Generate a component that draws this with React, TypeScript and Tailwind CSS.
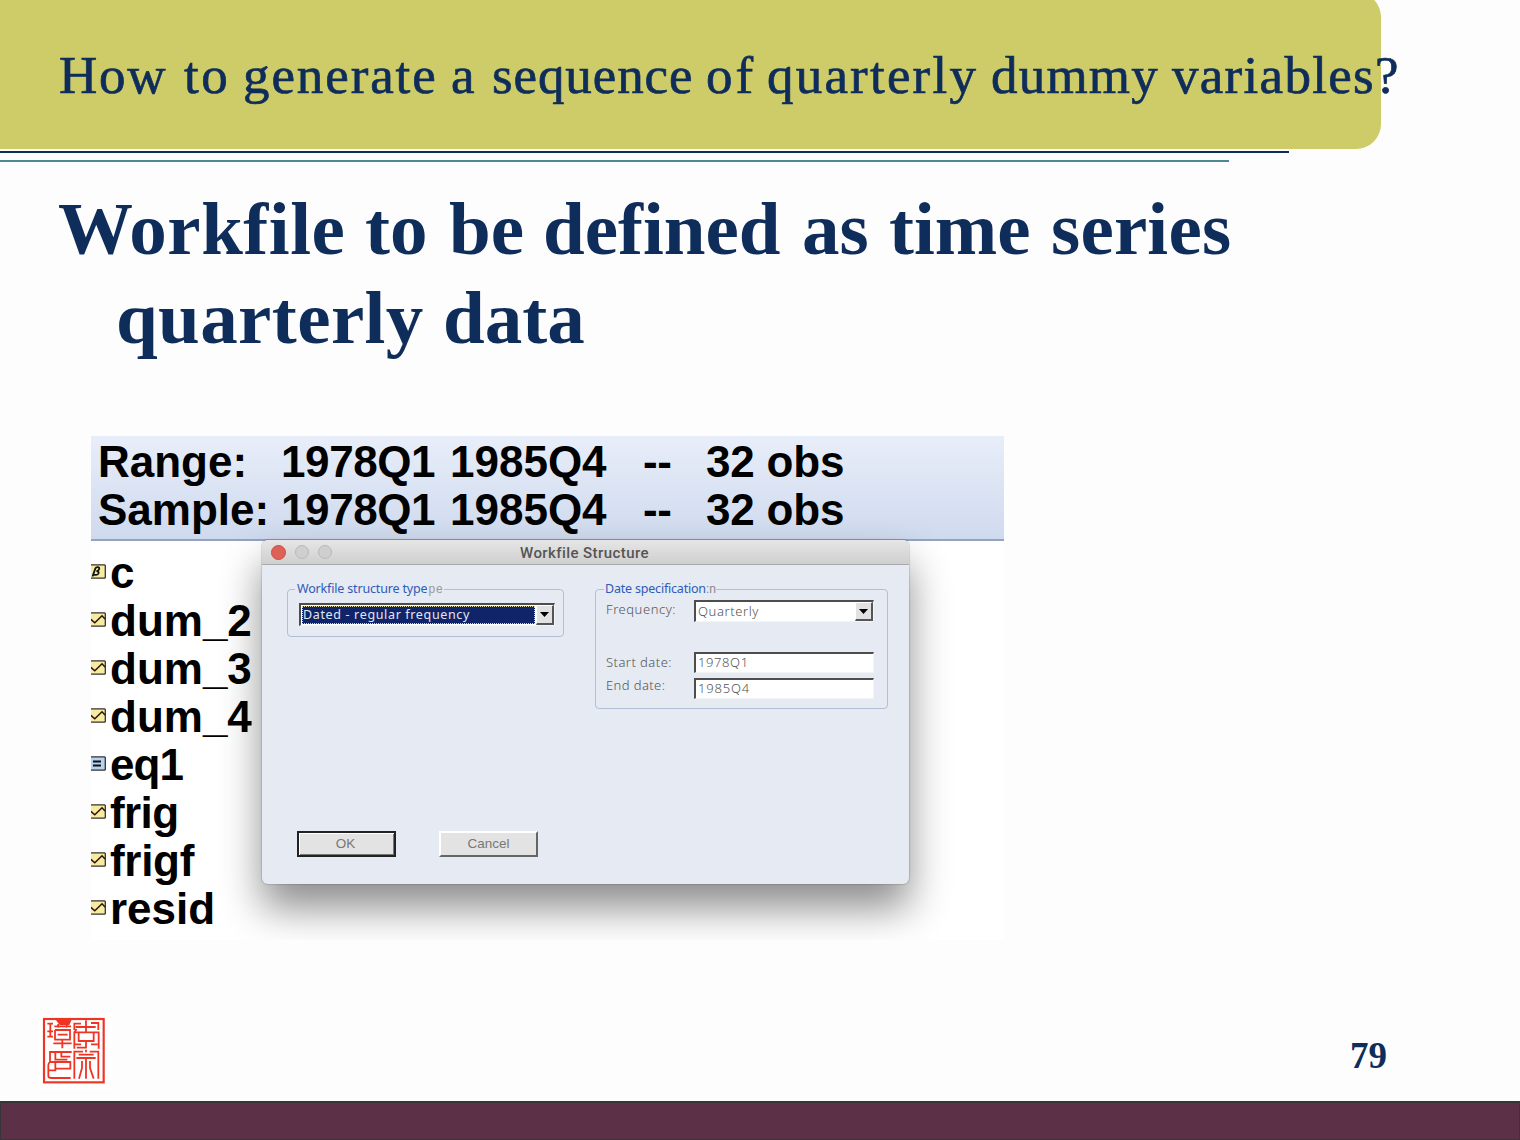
import React from 'react';

type Word = { text: string; cls: string };

const titleWords: Word[] = [
  { text: 'How', cls: 'w-[125px] tracking-[1.8px]' },
  { text: 'to', cls: 'w-[59px] tracking-[2.5px]' },
  { text: 'generate', cls: 'w-[208px] tracking-[1.9px]' },
  { text: 'a', cls: 'w-[41px]' },
  { text: 'sequence', cls: 'w-[214px] tracking-[0.9px]' },
  { text: 'of', cls: 'w-[61px] tracking-[3px]' },
  { text: 'quarterly', cls: 'w-[224px] tracking-[2.2px]' },
  { text: 'dummy', cls: 'w-[181px] tracking-[1.2px]' },
  { text: 'variables?', cls: 'tracking-[1.3px]' },
];

const headingOne: Word[] = [
  { text: 'Workfile', cls: 'w-[307px] tracking-[0.5px]' },
  { text: 'to', cls: 'w-[84px]' },
  { text: 'be', cls: 'w-[94px]' },
  { text: 'defined', cls: 'w-[259px]' },
  { text: 'as', cls: 'w-[87px]' },
  { text: 'time', cls: 'w-[162px]' },
  { text: 'series', cls: 'tracking-[0.2px]' },
];

const headingTwo: Word[] = [
  { text: 'quarterly', cls: 'w-[327px] tracking-[0.4px]' },
  { text: 'data', cls: '' },
];

function Words({ items }: { items: Word[] }) {
  return (
    <>
      {items.map((w) => (
        <span key={w.text} className={`shrink-0 ${w.cls}`}>
          {w.text}
        </span>
      ))}
    </>
  );
}

type Kind = 'beta' | 'series' | 'equation';

function ObjectIcon({ kind }: { kind: Kind }) {
  return (
    <svg className="h-[15px] w-[15px] shrink-0" viewBox="0 0 15 15">
      <path
        d="M-1 .8H13.6L14.3 1.5V13.6L13.6 14.2H-1Z"
        fill={kind === 'equation' ? '#b5d3ef' : '#f7eb9f'}
        stroke="#333"
        strokeWidth="1.3"
      />
      {kind === 'series' && (
        <path d="M-.5 7L3.8 10.8L11 3.8L14 7" fill="none" stroke="#2b1208" strokeWidth="1.5" />
      )}
      {kind === 'equation' && <path d="M2 5.5H10M2 9.5H10" stroke="#111" strokeWidth="2" />}
      {kind === 'beta' && (
        <path
          d="M1.5 12.5L4.4 4.4Q5 3 7 3.2Q9 3.7 7.9 5.6Q7.2 7.1 5.4 7.1Q8.4 7.4 7.4 9.6Q6.3 11.6 3 10.6"
          fill="none"
          stroke="#111"
          strokeWidth="1.8"
        />
      )}
    </svg>
  );
}

const objects: { name: string; kind: Kind; cls: string }[] = [
  { name: 'c', kind: 'beta', cls: '' },
  { name: 'dum_2', kind: 'series', cls: '' },
  { name: 'dum_3', kind: 'series', cls: '' },
  { name: 'dum_4', kind: 'series', cls: '' },
  { name: 'eq1', kind: 'equation', cls: 'tracking-[-0.9px]' },
  { name: 'frig', kind: 'series', cls: 'tracking-[-0.6px]' },
  { name: 'frigf', kind: 'series', cls: 'tracking-[-0.3px]' },
  { name: 'resid', kind: 'series', cls: '' },
];

function RangeLine({ label }: { label: string }) {
  return (
    <div className="flex h-12 leading-[48px] whitespace-pre">
      <span className="w-[183px]">{label}</span>
      <span className="w-[169px] tracking-[-0.4px]">1978Q1</span>
      <span className="w-[193px]">1985Q4</span>
      <span className="w-[63px] tracking-[-0.5px]">--</span>
      <span className="tracking-[-0.2px]">32 obs</span>
    </div>
  );
}

function DropButton() {
  return (
    <span className="flex h-full w-[18px] items-center justify-center border-t border-r-2 border-b-2 border-l border-t-white border-r-[#555] border-b-[#555] border-l-white bg-[#e2e2e2]">
      <svg className="h-[5px] w-[9px]" viewBox="0 0 9 5">
        <path d="M0 0H9L4.5 5Z" fill="#000" />
      </svg>
    </span>
  );
}

const sunken =
  'border-t-2 border-l-2 border-b border-r border-t-[#4d4d4d] border-l-[#4d4d4d] border-b-[#f4f4f4] border-r-[#f4f4f4] bg-white';

function Dialog() {
  return (
    <div className="absolute top-[104px] left-[171px] h-[344px] w-[647px] rounded-[6px] bg-[#e5eaf3] font-['Liberation_Sans'] text-[#555] shadow-[0_0_1px_1px_rgba(0,0,0,0.12),0_24px_40px_rgba(0,0,0,0.45)]">
      <div className="flex h-[25px] items-center rounded-t-[6px] border-b border-[#aaa] bg-linear-to-b from-[#e6e6e6] to-[#cfcfcf] pl-[9px]">
        <span className="mr-[9px] h-[15px] w-[15px] rounded-full border border-[#cb4d42] bg-[#dd6156]" />
        <span className="mr-[9px] h-[14px] w-[14px] rounded-full border border-[#b9b9b9] bg-[#cfcfcf]" />
        <span className="h-[14px] w-[14px] rounded-full border border-[#b9b9b9] bg-[#cfcfcf]" />
        <span className="mt-[2px] ml-[188px] font-['Roboto'] text-[15px] font-medium tracking-[0.42px] whitespace-nowrap text-[#555]">
          Workfile Structure
        </span>
      </div>
      <div className="flex items-start pt-[24px] pl-[25px]">
        <div className="h-[48px] w-[277px] rounded-[4px] border-[1.5px] border-[#b3bfd6]">
          <div className="-mt-[10px] ml-[7px] flex h-[18px] items-center">
            <span className="bg-[#e5eaf3] pl-[2px] font-['Noto_Sans'] text-[12.5px] tracking-[-0.17px] whitespace-nowrap text-[#2f5bb7]">
              Workfile structure type
            </span>
            <span className="bg-[#e5eaf3] pl-px text-[12px] leading-[18px] tracking-[1px] text-[#999]">pe</span>
          </div>
          <div className={`mt-[5px] ml-[11px] flex h-[23px] w-[256px] ${sunken}`}>
            <span className="m-[1px] flex flex-1 items-center border border-dotted border-[#d9d4a0] bg-[#10246a] font-['Noto_Sans'] text-[12.5px] leading-none tracking-[0.65px] whitespace-nowrap text-[#e4e6f0]">
              Dated - regular frequency
            </span>
            <DropButton />
          </div>
        </div>
        <div className="ml-[31px] h-[120px] w-[293px] rounded-[4px] border-[1.5px] border-[#b3bfd6] text-[12.5px]">
          <div className="-mt-[10px] ml-[8px] flex h-[18px] items-center">
            <span className="bg-[#e5eaf3] pl-px font-['Noto_Sans'] tracking-[-0.2px] whitespace-nowrap text-[#2f5bb7]">
              Date specification
            </span>
            <span className="bg-[#e5eaf3] text-[12px] leading-[18px] text-[#888]">:n</span>
          </div>
          <div className="mt-[2px] flex h-[22px] pl-[10px]">
            <span className="w-[88px] font-['Noto_Sans'] text-[13px] leading-[19px] font-light tracking-[0.55px]">Frequency:</span>
            <div className={`flex h-[22px] w-[180px] ${sunken}`}>
              <span className="flex-1 pl-[2px] font-['Noto_Sans'] text-[13px] leading-[18px] font-light tracking-[0.6px]">Quarterly</span>
              <DropButton />
            </div>
          </div>
          <div className="mt-[30px] flex h-[21px] pl-[10px]">
            <span className="w-[88px] font-['Noto_Sans'] text-[13px] leading-[20px] font-light tracking-[0.45px]">Start date:</span>
            <div className={`h-[21px] w-[180px] pl-[2px] font-['Noto_Sans'] text-[13px] leading-[17px] font-light tracking-[0.6px] ${sunken}`}>
              1978Q1
            </div>
          </div>
          <div className="mt-[5px] flex h-[21px] pl-[10px]">
            <span className="w-[88px] font-['Noto_Sans'] text-[13px] leading-[14px] font-light tracking-[0.4px]">End date:</span>
            <div className={`h-[21px] w-[180px] pl-[2px] font-['Noto_Sans'] text-[13px] leading-[17px] font-light tracking-[0.8px] ${sunken}`}>
              1985Q4
            </div>
          </div>
        </div>
      </div>
      <div className="mt-[122px] flex gap-[43px] pl-[35px] text-[13.5px] text-[#777]">
        <div className="flex h-[26px] w-[99px] items-center justify-center border-2 border-[#222] bg-[#e3e3e3] pr-[2px] shadow-[inset_1px_1px_#fff,inset_-1px_-1px_#777]">
          OK
        </div>
        <div className="flex h-[26px] w-[99px] items-center justify-center border-2 border-t-white border-r-[#666] border-b-[#666] border-l-white bg-[#e3e3e3]">
          Cancel
        </div>
      </div>
    </div>
  );
}

function Seal() {
  return (
    <svg className="h-[76px] w-[74px] bg-white" viewBox="25 40 222 228" fill="none" stroke="#ee3524" strokeWidth="5.4">
      <rect x="43" y="58" width="179" height="190" strokeWidth="6.5" />
      <path d="M78 60H126L119 76H90Z" fill="#ee3524" stroke="none" />
      <path d="M53 72H70M53 95H70M53 111H70M62 72V111M74 80H124M85 73L87 84M112 73L110 84M76 91V120H121V91H76M84 105H114M98 120V146M71 131H126" />
      <path d="M134 91V72H154M184 70H206V91M169 62V98M138 82H198M141 88L134 98V147M134 98H150M192 98H207V147M147 98V124H192V98H147M169 124V137M134 134H154M184 134H204M141 144H169V134" />
      <path d="M126 157H61V187H122V207H77M77 157V180H113M95 157V171H122M61 187Q56 190 56 197V229Q56 235 65 235H123M56 212H77V187" />
      <path d="M134 237V156H160M180 156H206V237M169 150V158M147 165H192M140 175H198M169 175V237M157 184V205L148 237M181 184V205L192 237" />
    </svg>
  );
}

export default function App() {
  return (
    <div className="flex h-[1140px] w-[1520px] flex-col overflow-hidden bg-[#fdfdfd] font-['Liberation_Serif'] text-[#0f2d5a]">
      <header className="h-[149px] w-[1381px] overflow-visible">
        <div className="-mt-[8px] flex h-[157px] w-[1381px] items-center rounded-r-[25px] bg-[#cecb69] pl-[59px]">
          <h1 className="mt-[8px] flex text-[53px] leading-[60px] whitespace-nowrap [-webkit-text-stroke:0.7px_#0f2d5a]">
            <Words items={titleWords} />
          </h1>
        </div>
      </header>
      <div className="mt-[2px] h-[2px] w-[1289px] shrink-0 bg-[#0f2d5a]" />
      <div className="mt-[7px] h-[2px] w-[1229px] shrink-0 bg-[#4f8795]" />
      <h2 className="mt-[22px] pl-[58px] text-[75px] leading-[89px] font-bold whitespace-nowrap">
        <span className="flex"><Words items={headingOne} /></span>
        <span className="flex pl-[58px]"><Words items={headingTwo} /></span>
      </h2>
      <section className="relative mt-[74px] ml-[91px] h-[504px] w-[913px] shrink-0 overflow-hidden bg-white font-['Liberation_Sans'] text-[44px] font-bold text-black">
        <div className="h-[105px] border-b-2 border-[#94a2c4] bg-linear-to-b from-[#e8eef9] to-[#cfdaee] pt-[2px] pl-[7px]">
          <RangeLine label="Range:" />
          <RangeLine label="Sample:" />
        </div>
        <ul className="pt-[8px]">
          {objects.map((o) => (
            <li key={o.name} className="flex h-12 items-center gap-[4px] leading-[48px]">
              <span className="flex pb-[3px]"><ObjectIcon kind={o.kind} /></span>
              <span className={o.cls}>{o.name}</span>
            </li>
          ))}
        </ul>
        <div className="font-normal"><Dialog /></div>
      </section>
      <div className="mt-[73px] flex h-[76px] shrink-0 justify-between pr-[133px] pl-[38px]">
        <Seal />
        <span className="pt-[21px] text-[37px] leading-[44px] font-bold">79</span>
      </div>
      <footer className="mt-auto h-[39px] shrink-0 border border-t-2 border-[#363639] bg-[#5c3046]" />
    </div>
  );
}
